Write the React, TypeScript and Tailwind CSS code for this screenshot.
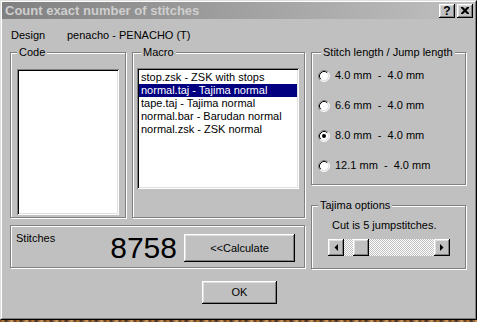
import React from "react";

const raised =
  "shadow-[inset_-1px_-1px_0_#000,inset_1px_1px_0_#fff,inset_-2px_-2px_0_#808080,inset_2px_2px_0_#dfdfdf]";
const sunken =
  "shadow-[inset_1px_1px_0_#808080,inset_-1px_-1px_0_#fff,inset_2px_2px_0_#000,inset_-2px_-2px_0_#dfdfdf]";

function Group({
  label,
  labelPos,
  wrap,
  inner,
  children,
}: {
  label?: string;
  labelPos?: string;
  wrap: string;
  inner: string;
  children?: React.ReactNode;
}) {
  return (
    <div className={"pr-px pb-px " + wrap}>
      <div
        className={
          "relative border border-[#808080] shadow-[1px_1px_0_#fff,inset_1px_1px_0_#fff] " +
          inner
        }
      >
        {label && (
          <span
            className={
              "absolute -top-[7px] px-[2px] bg-[#c0c0c0] leading-[13px] whitespace-nowrap " +
              (labelPos || "")
            }
          >
            {label}
          </span>
        )}
        {children}
      </div>
    </div>
  );
}

function Radio({ checked }: { checked?: boolean }) {
  return (
    <svg width="12" height="12" viewBox="0 0 12 12" className="shrink-0">
      <circle cx="6" cy="6" r="5" fill="#fff" />
      <path d="M9.89 2.11 A5.5 5.5 0 0 0 2.11 9.89" stroke="#808080" fill="none" />
      <path d="M9.18 2.82 A4.5 4.5 0 0 0 2.82 9.18" stroke="#000" fill="none" />
      <path d="M9.89 2.11 A5.5 5.5 0 0 1 2.11 9.89" stroke="#fff" fill="none" />
      <path d="M9.18 2.82 A4.5 4.5 0 0 1 2.82 9.18" stroke="#dfdfdf" fill="none" />
      {checked && <circle cx="6" cy="6" r="2" fill="#000" />}
    </svg>
  );
}

function RadioRow({ text, checked }: { text: string; checked?: boolean }) {
  return (
    <div className="flex items-center h-[13px] gap-[5px]">
      <Radio checked={checked} />
      <span className="leading-[13px] whitespace-pre">{text}</span>
    </div>
  );
}

export default function App() {
  const items = [
    "stop.zsk - ZSK with stops",
    "normal.taj - Tajima normal",
    "tape.taj - Tajima normal",
    "normal.bar - Barudan normal",
    "normal.zsk - ZSK normal",
  ];
  return (
    <div className="w-[477px] h-[322px] bg-black font-['Liberation_Sans',Arial,sans-serif] text-[11px] text-black overflow-hidden">
      <div className="w-[477px] h-[320px] border border-t-[#dfdfdf] border-l-[#dfdfdf] border-r-black border-b-black bg-[#c0c0c0]">
        <div className="h-full border border-t-white border-l-white border-r-[#808080] border-b-[#808080] flex flex-col">
          {/* Title bar */}
          <div className="h-[17px] flex items-start bg-[linear-gradient(90deg,#808080,#c0c0c0)]">
            <span className="pl-[3px] text-[13px] leading-[17px] font-bold text-[#cfcfcf] whitespace-nowrap">
              Count exact number of stitches
            </span>
            <div className="ml-auto flex gap-[2px] pt-[2px] pr-[2px]">
              <div className={"w-[16px] h-[14px] bg-[#c0c0c0] flex items-center justify-center " + raised}>
                <span className="font-bold text-[12px] leading-[12px] -mt-[1px]">?</span>
              </div>
              <div className={"w-[16px] h-[14px] bg-[#c0c0c0] flex items-center justify-center " + raised}>
                <svg width="8" height="7" viewBox="0 0 8 7" className="-mt-[1px]">
                  <path d="M0 0h2l2 2 2-2h2v1l-2.5 2.5L8 6v1H6L4 5 2 7H0V6l2.5-2.5L0 1z" fill="#000" />
                </svg>
              </div>
            </div>
          </div>

          {/* Design row */}
          <div className="mt-[10px] pl-[9px] flex h-[13px] leading-[13px]">
            <span className="w-[56px]">Design</span>
            <span>penacho - PENACHO (T)</span>
          </div>

          {/* Main area */}
          <div className="mt-[4px] pl-[8px] flex">
            {/* Left column */}
            <div className="w-[296px] flex flex-col">
              <div className="flex gap-[5px]">
                <Group
                  label="Code"
                  labelPos="left-[6px]"
                  wrap="pt-[6px]"
                  inner="w-[116px] h-[166px] pl-[6px] pt-[16px]"
                >
                  <div className={"w-[102px] h-[146px] bg-white " + sunken} />
                </Group>
                <Group
                  label="Macro"
                  labelPos="left-[8px]"
                  wrap="pt-[6px]"
                  inner="w-[173px] h-[166px] pl-[4px] pt-[15px]"
                >
                  <div className={"w-[162px] h-[121px] bg-white p-[2px] pt-[3px] " + sunken}>
                    {items.map((t, i) => (
                      <div
                        key={t}
                        className={
                          "h-[13px] leading-[13px] pl-[2px] whitespace-nowrap " +
                          (i === 1 ? "bg-[#000080] text-white" : "")
                        }
                      >
                        {t}
                      </div>
                    ))}
                  </div>
                </Group>
              </div>
              <Group wrap="mt-[6px]" inner="w-[295px] h-[43px] flex items-start pl-[5px]">
                <span className="mt-[6px] leading-[13px] flex-1">Stitches</span>
                <span className="mt-[7px] text-[30px] leading-[30px] mr-[7px]">8758</span>
                <button
                  className={
                    "mt-[8px] mr-[9px] w-[111px] h-[28px] bg-[#c0c0c0] text-[11px] leading-[13px] " + raised
                  }
                >
                  &lt;&lt;Calculate
                </button>
              </Group>
            </div>

            {/* Right column */}
            <div className="ml-[5px] flex flex-col">
              <Group
                label="Stitch length / Jump length"
                labelPos="left-[9px]"
                wrap="pt-[6px]"
                inner="w-[155px] h-[133px] pl-[6px] pt-[16px] flex flex-col gap-[17px]"
              >
                <RadioRow text="4.0 mm  -  4.0 mm" />
                <RadioRow text="6.6 mm  -  4.0 mm" />
                <RadioRow text="8.0 mm  -  4.0 mm" checked />
                <RadioRow text="12.1 mm  -  4.0 mm" />
              </Group>
              <Group
                label="Tajima options"
                labelPos="left-[6px]"
                wrap="pt-[6px] mt-[13px]"
                inner="w-[155px] h-[64px] pt-[13px] flex flex-col"
              >
                <span className="pl-[20px] leading-[13px] whitespace-nowrap">Cut is 5 jumpstitches.</span>
                <div className="ml-[16px] mt-[7px] w-[122px] h-[17px] flex bg-[repeating-conic-gradient(#c0c0c0_0_25%,#fff_0_50%)] bg-[length:2px_2px]">
                  <div className={"w-[16px] h-[17px] bg-[#c0c0c0] flex items-center justify-center " + raised}>
                    <svg width="4" height="7" viewBox="0 0 4 7">
                      <path d="M4 0v7L0.5 3.5z" fill="#000" />
                    </svg>
                  </div>
                  <div className={"ml-[9px] w-[16px] h-[17px] bg-[#c0c0c0] " + raised} />
                  <div className={"ml-auto w-[16px] h-[17px] bg-[#c0c0c0] flex items-center justify-center " + raised}>
                    <svg width="4" height="7" viewBox="0 0 4 7">
                      <path d="M0 0v7L3.5 3.5z" fill="#000" />
                    </svg>
                  </div>
                </div>
              </Group>
            </div>
          </div>

          {/* OK */}
          <div className="mt-[11px] pl-[200px] flex">
            <button className={"w-[75px] h-[23px] bg-[#c0c0c0] text-[11px] leading-[13px] " + raised}>OK</button>
          </div>
        </div>
      </div>
      <div className="h-[2px] bg-[repeating-linear-gradient(90deg,#6b3b1b_0,#c0803a_3px,#3a2a20_6px,#9a6a40_9px,#d8a060_12px,#4a3020_15px)]" />
    </div>
  );
}
